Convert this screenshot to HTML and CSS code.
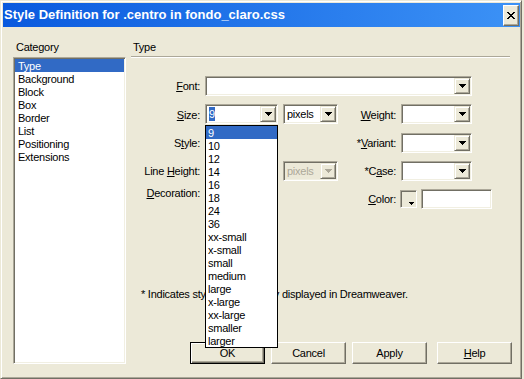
FILE: index.html
```html
<!DOCTYPE html>
<html>
<head>
<meta charset="utf-8">
<link rel="stylesheet" href="styles.css">
</head>
<body>
<div class="window">
  <div class="titlebar">
    <span class="title">Style Definition for .centro in fondo_claro.css</span>
    <span class="close"><svg width="8" height="7" viewBox="0 0 8 7" shape-rendering="crispEdges"><path d="M0 0h2v1h-2zM6 0h2v1h-2zM1 1h2v1h-2zM5 1h2v1h-2zM2 2h4v1h-4zM3 3h2v1h-2zM2 4h4v1h-4zM1 5h2v1h-2zM5 5h2v1h-2zM0 6h2v1h-2zM6 6h2v1h-2z"/></svg></span>
  </div>
  <div class="content">
    <div class="sidebar">
      <div class="head">Category</div>
      <div class="catlist">
        <div class="item selected">Type</div>
        <div class="item">Background</div>
        <div class="item">Block</div>
        <div class="item">Box</div>
        <div class="item">Border</div>
        <div class="item">List</div>
        <div class="item">Positioning</div>
        <div class="item">Extensions</div>
      </div>
    </div>
    <div class="panel">
      <div class="panel-head">Type</div>
      <div class="form">
        <div class="lbl"><u>F</u>ont:</div>
        <div class="combo font-combo"><span class="val"></span><span class="arrow"><svg width="7" height="4" viewBox="0 0 7 4" shape-rendering="crispEdges"><path d="M0 0h7v1h-7zM1 1h5v1h-5zM2 2h3v1h-3zM3 3h1v1h-1z"/></svg></span></div>

        <div class="lbl"><u>S</u>ize:</div>
        <div class="size-wrap">
          <div class="combo w73"><span class="val"><span class="sel">9</span></span><span class="arrow"><svg width="7" height="4" viewBox="0 0 7 4" shape-rendering="crispEdges"><path d="M0 0h7v1h-7zM1 1h5v1h-5zM2 2h3v1h-3zM3 3h1v1h-1z"/></svg></span></div>
          <div class="dropdown">
            <div class="opt on">9</div>
            <div class="opt">10</div>
            <div class="opt">12</div>
            <div class="opt">14</div>
            <div class="opt">16</div>
            <div class="opt">18</div>
            <div class="opt">24</div>
            <div class="opt">36</div>
            <div class="opt">xx-small</div>
            <div class="opt">x-small</div>
            <div class="opt">small</div>
            <div class="opt">medium</div>
            <div class="opt">large</div>
            <div class="opt">x-large</div>
            <div class="opt">xx-large</div>
            <div class="opt">smaller</div>
            <div class="opt">larger</div>
          </div>
        </div>
        <div class="combo w55"><span class="val">pixels</span><span class="arrow"><svg width="7" height="4" viewBox="0 0 7 4" shape-rendering="crispEdges"><path d="M0 0h7v1h-7zM1 1h5v1h-5zM2 2h3v1h-3zM3 3h1v1h-1z"/></svg></span></div>
        <div class="lbl"><u>W</u>eight:</div>
        <div class="combo w71"><span class="val"></span><span class="arrow"><svg width="7" height="4" viewBox="0 0 7 4" shape-rendering="crispEdges"><path d="M0 0h7v1h-7zM1 1h5v1h-5zM2 2h3v1h-3zM3 3h1v1h-1z"/></svg></span></div>

        <div class="lbl">S<u>t</u>yle:</div>
        <div class="combo w73"><span class="val"></span><span class="arrow"></span></div>
        <div></div>
        <div class="lbl">*<u>V</u>ariant:</div>
        <div class="combo w71"><span class="val"></span><span class="arrow"><svg width="7" height="4" viewBox="0 0 7 4" shape-rendering="crispEdges"><path d="M0 0h7v1h-7zM1 1h5v1h-5zM2 2h3v1h-3zM3 3h1v1h-1z"/></svg></span></div>

        <div class="lbl">Line <u>H</u>eight:</div>
        <div class="combo w73"><span class="val"></span><span class="arrow"></span></div>
        <div class="combo w55 disabled"><span class="val">pixels</span><span class="arrow"><svg width="7" height="4" viewBox="0 0 7 4" shape-rendering="crispEdges"><path d="M0 0h7v1h-7zM1 1h5v1h-5zM2 2h3v1h-3zM3 3h1v1h-1z"/></svg></span></div>
        <div class="lbl">*C<u>a</u>se:</div>
        <div class="combo w71"><span class="val"></span><span class="arrow"><svg width="7" height="4" viewBox="0 0 7 4" shape-rendering="crispEdges"><path d="M0 0h7v1h-7zM1 1h5v1h-5zM2 2h3v1h-3zM3 3h1v1h-1z"/></svg></span></div>

        <div class="lbl top"><u>D</u>ecoration:</div>
        <div></div>
        <div></div>
        <div class="lbl"><u>C</u>olor:</div>
        <div class="color-row">
          <span class="swatch"><svg width="5" height="3" viewBox="0 0 5 3" shape-rendering="crispEdges"><path d="M0 0h5v1h-5zM1 1h3v1h-3zM2 2h1v1h-1z"/></svg></span>
          <span class="text-input"></span>
        </div>
      </div>
      <div class="note">* Indicates styles not currently displayed in Dreamweaver.</div>
      <div class="buttons">
        <div class="btn default">OK</div>
        <div class="btn">Cancel</div>
        <div class="btn">Apply</div>
        <div class="btn help"><span><u>H</u>elp</span></div>
      </div>
    </div>
  </div>
</div>
</body>
</html>
```
FILE: styles.css
```css
body {
  margin: 0;
  background: #ece9d8;
  font-family: "Liberation Sans", Arial, sans-serif;
  font-size: 11px;
  letter-spacing: -0.25px;
  color: #000;
}

.window {
  width: 522px;
  height: 379px;
  box-sizing: border-box;
  border: 1px solid;
  border-color: #ece9d8 #716f64 #716f64 #ece9d8;
  box-shadow: inset 1px 1px #fff, inset -1px -1px #aca899;
  padding: 2px 1px 0 2px;
  background: #ece9d8;
}

.titlebar {
  height: 24px;
  display: flex;
  align-items: center;
  background: linear-gradient(90deg, #0a5ade, #3c92f6);
  color: #fff;
}

.title {
  font-weight: bold;
  font-size: 13px;
  letter-spacing: 0;
  padding-left: 1px;
  line-height: 24px;
}

.close {
  margin-left: auto;
  margin-right: 1px;
  width: 16px;
  height: 21px;
  box-sizing: border-box;
  background: #ece9d8;
  border: 1px solid;
  border-color: #fff #716f64 #716f64 #fff;
  box-shadow: inset -1px -1px #aca899;
  display: flex;
  align-items: center;
  justify-content: center;
}

.close svg { fill: #000; }

.content {
  display: flex;
  height: 350px;
  box-sizing: border-box;
  padding: 13px 0 13px 10px;
}

.sidebar {
  width: 113px;
  display: flex;
  flex-direction: column;
}

.head {
  height: 14px;
  line-height: 14px;
  padding-left: 3px;
}

.catlist {
  margin-top: 3px;
  flex: 1;
  background: #fff;
  border: 1px solid;
  border-color: #aca899 #fff #fff #aca899;
  box-shadow: inset 1px 1px #716f64, inset -1px -1px #f1efe2;
  padding: 1px;
}

.item {
  height: 13px;
  line-height: 14px;
  padding-left: 3px;
  white-space: nowrap;
}

.item.selected {
  background: #316ac5;
  color: #fff;
}

.panel {
  margin-left: 5px;
  width: 379px;
  display: flex;
  flex-direction: column;
}

.panel-head {
  height: 16px;
  line-height: 14px;
  padding-left: 2px;
  border-bottom: 1px solid #aca899;
  box-shadow: 0 1px #fff;
}

.form {
  display: grid;
  grid-template-columns: 69px 73px 55px 53px 91px;
  grid-template-rows: 20px 21px 20px 20px 20px;
  column-gap: 5px;
  row-gap: 8px;
  margin-top: 19px;
}

.lbl {
  justify-self: end;
  align-self: center;
  line-height: 14px;
  white-space: nowrap;
}

.lbl.top { align-self: start; margin-top: -3px; }

.combo {
  height: 20px;
  box-sizing: border-box;
  display: flex;
  background: #fff;
  border: 1px solid;
  border-color: #aca899 #fff #fff #aca899;
  box-shadow: inset 1px 1px #716f64, inset -1px -1px #f1efe2;
  padding: 1px;
  align-self: start;
}

.font-combo { grid-column: 2 / 6; width: 267px; }
.w73 { width: 73px; }
.w55 { width: 55px; }
.w71 { width: 71px; }

.val {
  flex: 1;
  line-height: 16px;
  padding-left: 2px;
  white-space: nowrap;
  overflow: hidden;
}

.sel {
  background: #316ac5;
  color: #fff;
  padding: 1px 0;
}

.arrow {
  width: 16px;
  height: 16px;
  box-sizing: border-box;
  background: #ece9d8;
  border: 1px solid;
  border-color: #ece9d8 #716f64 #716f64 #ece9d8;
  box-shadow: inset 1px 1px #fff, inset -1px -1px #aca899;
  display: flex;
  align-items: center;
  justify-content: center;
}

.arrow svg { fill: #000; }

.combo.disabled { background: #ece9d8; color: #aca899; }
.combo.disabled .arrow svg { fill: #aca899; }

.size-wrap {
  position: relative;
}

.dropdown {
  position: absolute;
  left: 0;
  top: 21px;
  width: 73px;
  box-sizing: border-box;
  border: 1px solid #000;
  background: #fff;
  z-index: 5;
}

.opt {
  height: 13px;
  line-height: 14px;
  padding-left: 2px;
  white-space: nowrap;
}

.opt.on {
  background: #316ac5;
  color: #fff;
}

.color-row {
  display: flex;
  align-items: center;
}

.swatch {
  width: 17px;
  height: 18px;
  box-sizing: border-box;
  margin-left: -1px;
  border: 1px solid;
  border-color: #aca899 #fff #fff #aca899;
  box-shadow: inset 1px 1px #716f64;
  display: flex;
  align-items: flex-end;
  justify-content: flex-end;
  padding: 0 2px 2px 0;
}

.swatch svg { fill: #000; }

.text-input {
  margin-left: 4px;
  width: 71px;
  height: 20px;
  box-sizing: border-box;
  background: #fff;
  border: 1px solid;
  border-color: #aca899 #fff #fff #aca899;
  box-shadow: inset 1px 1px #716f64, inset -1px -1px #f1efe2;
}

.note {
  margin-top: 78px;
  padding-left: 10px;
  line-height: 14px;
  white-space: nowrap;
}

.buttons {
  margin-top: auto;
  margin-right: -2px;
  display: flex;
  justify-content: flex-end;
  gap: 6px;
}

.btn {
  width: 75px;
  height: 22px;
  box-sizing: border-box;
  background: #ece9d8;
  border: 1px solid;
  border-color: #fff #716f64 #716f64 #fff;
  box-shadow: inset -1px -1px #aca899;
  display: flex;
  align-items: center;
  justify-content: center;
}

.btn.default {
  border-color: #000;
  box-shadow: inset 1px 1px #fff, inset -1px -1px #716f64, inset -2px -2px #aca899;
}

.btn.help { margin-left: 4px; }
```
